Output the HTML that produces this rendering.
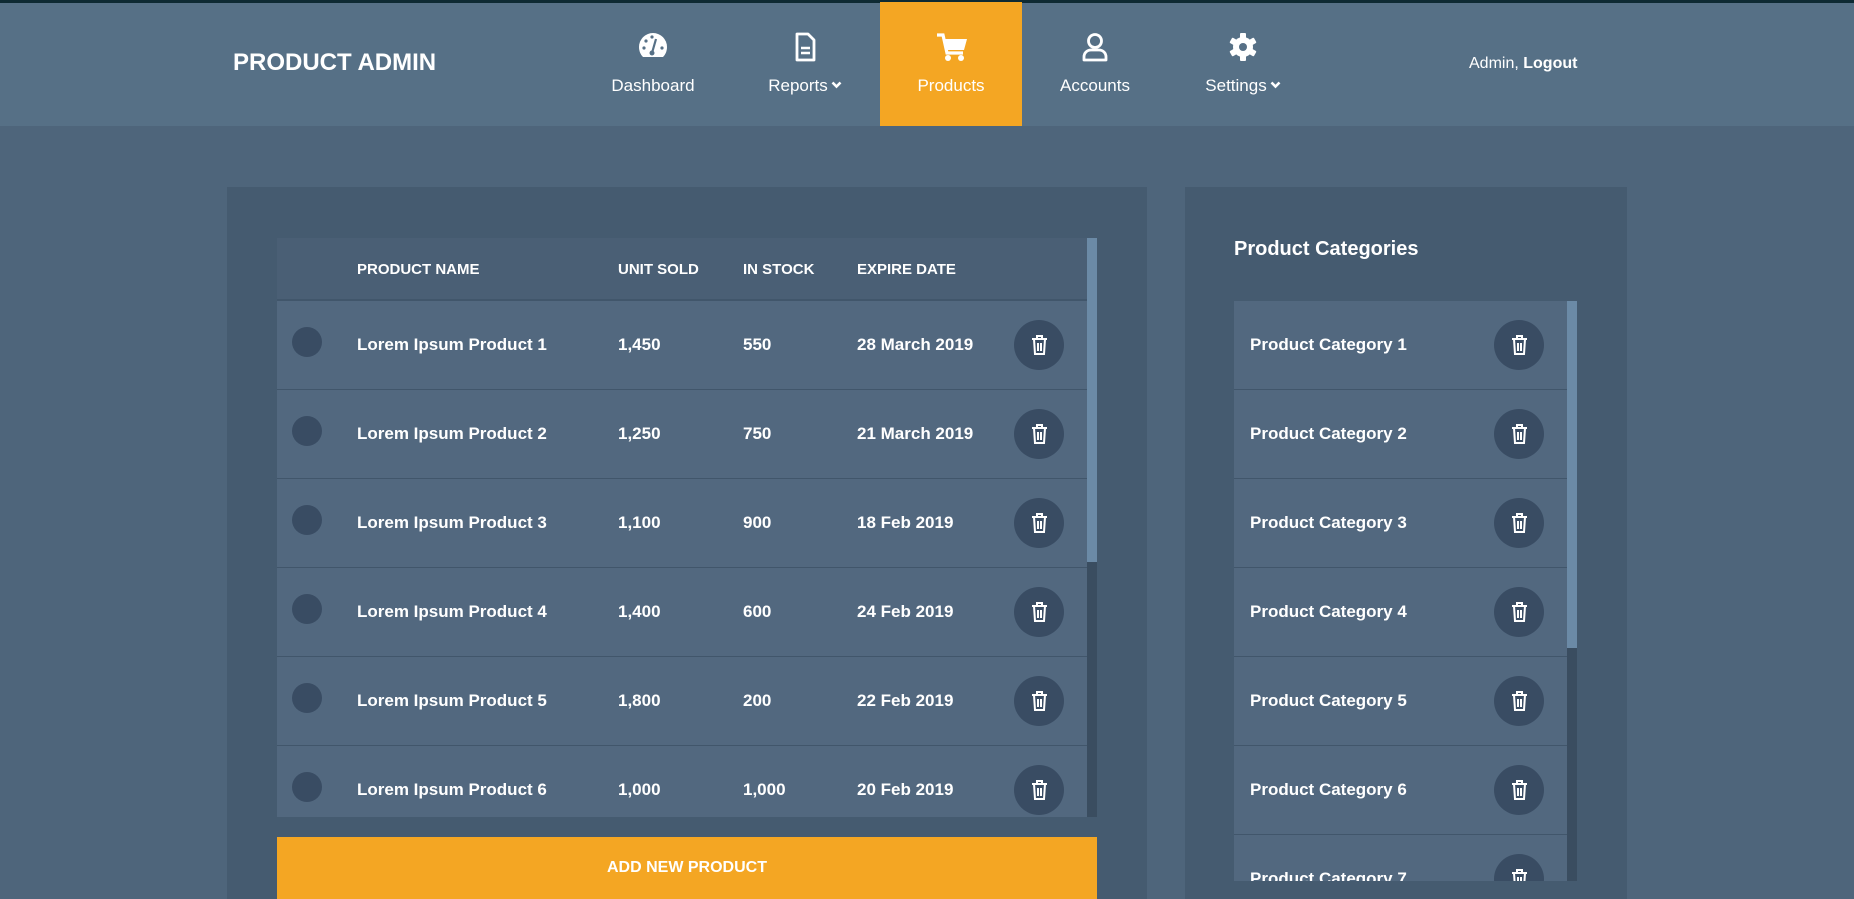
<!DOCTYPE html>
<html><head><meta charset="utf-8"><style>
*{margin:0;padding:0;box-sizing:border-box}
body{width:1854px;height:899px;background:#4e657b;font-family:"Liberation Sans",sans-serif;color:#fff;position:relative;overflow:hidden}
.abs{position:absolute}
.nav{left:0;top:0;width:1854px;height:126px;background:#567086;border-top:3px solid #0e2a33}
.brand{left:233px;top:49px;font-size:24px;font-weight:bold}
.item{top:0;height:126px;text-align:center;font-size:17px}
.item svg.ic{position:absolute;top:31px;left:50%;margin-left:-16px}
.item span{position:absolute;top:76px;left:0;right:0}
.chev{display:inline-block;vertical-align:middle;margin-left:3px;margin-top:-3px}
.admin{left:1469px;top:55px;font-size:16px}
.panel{background:#455b70}
.tbl{left:277px;top:238px;width:810px;height:579px;background:#52687f;overflow:hidden}
.hdr{position:absolute;left:0;top:0;width:810px;height:63px;background:#4a5f75;border-bottom:2px solid #41566b}
.hdr div,.row div{position:absolute;font-weight:bold}
.hdr div{top:23px;font-size:15px}
.row{position:absolute;left:0;width:810px;height:89px;border-bottom:1.5px solid #41566b}
.row div{top:34px;font-size:17px}
.dot{left:15px;top:26px!important;width:30px;height:30px;border-radius:50%;background:#394c63}
.tr{width:50px;height:50px;border-radius:50%;background:#394c63}
.tr svg{position:absolute;left:17px;top:14px}
.sb{background:#3a4d60}
.th{background:#6b8aa6}
</style></head><body>
<div class="abs nav"></div>
<div class="abs brand">PRODUCT ADMIN</div>
<div class="abs item" style="left:593px;width:120px"><svg class="ic" width="32" height="28" viewBox="0 0 32 28"><path d="M16 2A14 14 0 0 0 2 16c0 4 1.5 7.5 4 10h20c2.5-2.5 4-6 4-10A14 14 0 0 0 16 2z" fill="#fff"/><circle cx="15" cy="22" r="2.5" fill="#567086"/><path d="M15 22l4-14" stroke="#567086" stroke-width="2.2"/><circle cx="7" cy="17" r="1.6" fill="#567086"/><circle cx="9" cy="10" r="1.6" fill="#567086"/><circle cx="25" cy="17" r="1.6" fill="#567086"/><circle cx="15" cy="6" r="1.6" fill="#567086"/></svg><span>Dashboard</span></div>
<div class="abs item" style="left:745px;width:120px"><svg class="ic" width="32" height="32" viewBox="0 0 32 32"><path d="M8 3h11l6 6v20H8z" fill="none" stroke="#fff" stroke-width="2.8" stroke-linejoin="round"/><path d="M12 17h9M12 22h9" stroke="#fff" stroke-width="2.5"/></svg><span>Reports<svg class="chev" width="11" height="8" viewBox="0 0 11 8"><path d="M1.5 1.5l4 4 4-4" fill="none" stroke="#fff" stroke-width="2.6"/></svg></span></div>
<div class="abs" style="left:880px;top:2px;width:142px;height:124px;background:#f4a623"></div>
<div class="abs item" style="left:891px;width:120px"><svg class="ic" width="34" height="32" viewBox="0 0 34 32"><path d="M2 4h6l4 18h16" fill="none" stroke="#fff" stroke-width="3.2"/><path d="M8 8h24l-3 11H11z" fill="#fff"/><circle cx="13" cy="27" r="3" fill="#fff"/><circle cx="26" cy="27" r="3" fill="#fff"/></svg><span>Products</span></div>
<div class="abs item" style="left:1035px;width:120px"><svg class="ic" width="32" height="32" viewBox="0 0 32 32"><circle cx="16" cy="10" r="6.5" fill="none" stroke="#fff" stroke-width="2.8"/><path d="M5 29v-3c0-4 3-7 7-7h8c4 0 7 3 7 7v3z" fill="none" stroke="#fff" stroke-width="2.8" stroke-linejoin="round"/></svg><span>Accounts</span></div>
<div class="abs item" style="left:1183px;width:120px"><svg class="ic" width="32" height="32" viewBox="0 0 32 32"><g fill="#fff" transform="translate(16 16)"><circle r="10"/><rect x="-3" y="-14" width="6" height="28" rx="1"/><rect x="-3" y="-14" width="6" height="28" rx="1" transform="rotate(60)"/><rect x="-3" y="-14" width="6" height="28" rx="1" transform="rotate(120)"/></g><circle cx="16" cy="16" r="4" fill="#567086"/></svg><span>Settings<svg class="chev" width="11" height="8" viewBox="0 0 11 8"><path d="M1.5 1.5l4 4 4-4" fill="none" stroke="#fff" stroke-width="2.6"/></svg></span></div>
<div class="abs admin">Admin, <b>Logout</b></div>

<div class="abs panel" style="left:227px;top:187px;width:920px;height:712px"></div>
<div class="abs tbl">
<div class="hdr"><div style="left:80px">PRODUCT NAME</div><div style="left:341px">UNIT SOLD</div><div style="left:466px">IN STOCK</div><div style="left:580px">EXPIRE DATE</div></div>
<div class="row" style="top:63px"><div class="dot"></div><div style="left:80px">Lorem Ipsum Product 1</div><div style="left:341px">1,450</div><div style="left:466px">550</div><div style="left:580px">28 March 2019</div><div class="tr" style="left:737px;top:19px"><svg width="17" height="22" viewBox="0 0 17 22"><path d="M1 5h15M6 5V2h5v3M3 5l1 15h9l1-15M7 9v8M10 9v8" fill="none" stroke="#fff" stroke-width="2"/></svg></div></div>
<div class="row" style="top:152px"><div class="dot"></div><div style="left:80px">Lorem Ipsum Product 2</div><div style="left:341px">1,250</div><div style="left:466px">750</div><div style="left:580px">21 March 2019</div><div class="tr" style="left:737px;top:19px"><svg width="17" height="22" viewBox="0 0 17 22"><path d="M1 5h15M6 5V2h5v3M3 5l1 15h9l1-15M7 9v8M10 9v8" fill="none" stroke="#fff" stroke-width="2"/></svg></div></div>
<div class="row" style="top:241px"><div class="dot"></div><div style="left:80px">Lorem Ipsum Product 3</div><div style="left:341px">1,100</div><div style="left:466px">900</div><div style="left:580px">18 Feb 2019</div><div class="tr" style="left:737px;top:19px"><svg width="17" height="22" viewBox="0 0 17 22"><path d="M1 5h15M6 5V2h5v3M3 5l1 15h9l1-15M7 9v8M10 9v8" fill="none" stroke="#fff" stroke-width="2"/></svg></div></div>
<div class="row" style="top:330px"><div class="dot"></div><div style="left:80px">Lorem Ipsum Product 4</div><div style="left:341px">1,400</div><div style="left:466px">600</div><div style="left:580px">24 Feb 2019</div><div class="tr" style="left:737px;top:19px"><svg width="17" height="22" viewBox="0 0 17 22"><path d="M1 5h15M6 5V2h5v3M3 5l1 15h9l1-15M7 9v8M10 9v8" fill="none" stroke="#fff" stroke-width="2"/></svg></div></div>
<div class="row" style="top:419px"><div class="dot"></div><div style="left:80px">Lorem Ipsum Product 5</div><div style="left:341px">1,800</div><div style="left:466px">200</div><div style="left:580px">22 Feb 2019</div><div class="tr" style="left:737px;top:19px"><svg width="17" height="22" viewBox="0 0 17 22"><path d="M1 5h15M6 5V2h5v3M3 5l1 15h9l1-15M7 9v8M10 9v8" fill="none" stroke="#fff" stroke-width="2"/></svg></div></div>
<div class="row" style="top:508px;border:none"><div class="dot"></div><div style="left:80px">Lorem Ipsum Product 6</div><div style="left:341px">1,000</div><div style="left:466px">1,000</div><div style="left:580px">20 Feb 2019</div><div class="tr" style="left:737px;top:19px"><svg width="17" height="22" viewBox="0 0 17 22"><path d="M1 5h15M6 5V2h5v3M3 5l1 15h9l1-15M7 9v8M10 9v8" fill="none" stroke="#fff" stroke-width="2"/></svg></div></div>
</div>
<div class="abs sb" style="left:1087px;top:238px;width:10px;height:579px"></div>
<div class="abs th" style="left:1087px;top:238px;width:10px;height:324px"></div>
<div class="abs" style="left:277px;top:837px;width:820px;height:62px;background:#f4a623;text-align:center;font-weight:bold;font-size:16px;line-height:62px">ADD NEW PRODUCT</div>

<div class="abs panel" style="left:1185px;top:187px;width:442px;height:712px"></div>
<div class="abs" style="left:1234px;top:238px;font-size:20px;font-weight:bold">Product Categories</div>
<div class="abs tbl" style="left:1234px;top:301px;width:333px;height:580px">
<div class="row" style="top:0;width:333px"><div style="left:16px">Product Category 1</div><div class="tr" style="left:260px;top:19px"><svg width="17" height="22" viewBox="0 0 17 22"><path d="M1 5h15M6 5V2h5v3M3 5l1 15h9l1-15M7 9v8M10 9v8" fill="none" stroke="#fff" stroke-width="2"/></svg></div></div>
<div class="row" style="top:89px;width:333px"><div style="left:16px">Product Category 2</div><div class="tr" style="left:260px;top:19px"><svg width="17" height="22" viewBox="0 0 17 22"><path d="M1 5h15M6 5V2h5v3M3 5l1 15h9l1-15M7 9v8M10 9v8" fill="none" stroke="#fff" stroke-width="2"/></svg></div></div>
<div class="row" style="top:178px;width:333px"><div style="left:16px">Product Category 3</div><div class="tr" style="left:260px;top:19px"><svg width="17" height="22" viewBox="0 0 17 22"><path d="M1 5h15M6 5V2h5v3M3 5l1 15h9l1-15M7 9v8M10 9v8" fill="none" stroke="#fff" stroke-width="2"/></svg></div></div>
<div class="row" style="top:267px;width:333px"><div style="left:16px">Product Category 4</div><div class="tr" style="left:260px;top:19px"><svg width="17" height="22" viewBox="0 0 17 22"><path d="M1 5h15M6 5V2h5v3M3 5l1 15h9l1-15M7 9v8M10 9v8" fill="none" stroke="#fff" stroke-width="2"/></svg></div></div>
<div class="row" style="top:356px;width:333px"><div style="left:16px">Product Category 5</div><div class="tr" style="left:260px;top:19px"><svg width="17" height="22" viewBox="0 0 17 22"><path d="M1 5h15M6 5V2h5v3M3 5l1 15h9l1-15M7 9v8M10 9v8" fill="none" stroke="#fff" stroke-width="2"/></svg></div></div>
<div class="row" style="top:445px;width:333px"><div style="left:16px">Product Category 6</div><div class="tr" style="left:260px;top:19px"><svg width="17" height="22" viewBox="0 0 17 22"><path d="M1 5h15M6 5V2h5v3M3 5l1 15h9l1-15M7 9v8M10 9v8" fill="none" stroke="#fff" stroke-width="2"/></svg></div></div>
<div class="row" style="top:534px;width:333px"><div style="left:16px">Product Category 7</div><div class="tr" style="left:260px;top:19px"><svg width="17" height="22" viewBox="0 0 17 22"><path d="M1 5h15M6 5V2h5v3M3 5l1 15h9l1-15M7 9v8M10 9v8" fill="none" stroke="#fff" stroke-width="2"/></svg></div></div>
</div>
<div class="abs sb" style="left:1567px;top:301px;width:10px;height:580px"></div>
<div class="abs th" style="left:1567px;top:301px;width:10px;height:347px"></div>
</body></html>
